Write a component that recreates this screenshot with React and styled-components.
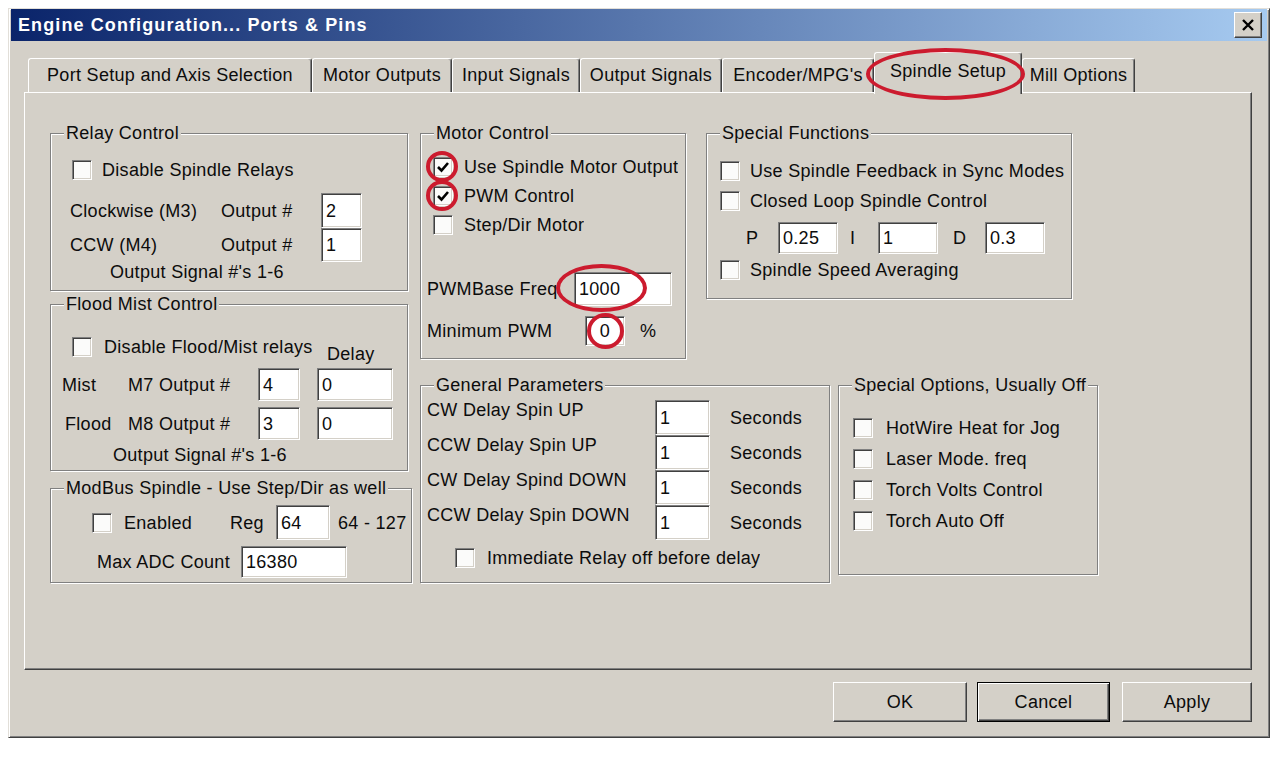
import React from 'react';
import styled, { createGlobalStyle } from 'styled-components';

const GlobalStyle = createGlobalStyle`
  html, body {
    margin: 0;
    padding: 0;
    background: #fff;
  }
  body {
    font-family: "Liberation Sans", Arial, sans-serif;
    font-size: 18px;
    letter-spacing: 0.3px;
    color: #0c0c0c;
  }
`;

const Window = styled.div`
  box-sizing: border-box;
  margin: 8px 0 0 8px;
  width: 1262px;
  height: 730px;
  padding: 0 2px;
  background: #d4d0c8;
  border: 1px solid;
  border-color: #e2dfd9 #404040 #404040 #e2dfd9;
  box-shadow: inset 1px 1px 0 #fff, inset -1px -1px 0 #808080;
  display: flex;
  flex-direction: column;
`;

const TitleBar = styled.div`
  height: 32px;
  display: flex;
  align-items: center;
  padding-left: 7px;
  background: linear-gradient(to right, #0a246a, #a6caf0);
`;

const Title = styled.span`
  color: #fff;
  font-weight: bold;
  font-size: 18px;
  letter-spacing: 1.1px;
`;

const CloseButton = styled.div`
  box-sizing: border-box;
  width: 28px;
  height: 26px;
  margin: 0 5px 0 auto;
  background: #d4d0c8;
  border: 1px solid;
  border-color: #fff #404040 #404040 #fff;
  box-shadow: inset -1px -1px 0 #808080;
  display: flex;
  align-items: center;
  justify-content: center;
`;

const TabStrip = styled.div`
  height: 51px;
  display: flex;
  align-items: flex-end;
  padding-left: 17px;
`;

const Tab = styled.div`
  box-sizing: border-box;
  position: relative;
  z-index: ${p => (p.$active ? 2 : 0)};
  width: ${p => p.$w}px;
  height: ${p => (p.$active ? 42 : 34)}px;
  margin-bottom: ${p => (p.$active ? -2 : 0)}px;
  padding-bottom: ${p => (p.$active ? 4 : 0)}px;
  display: flex;
  align-items: center;
  justify-content: center;
  background: #d4d0c8;
  border-top: 1px solid #fff;
  border-left: 1px solid #fff;
  border-right: 1px solid #404040;
  border-radius: 3px 3px 0 0;
  box-shadow: inset -1px 0 0 #808080;
  white-space: nowrap;
`;

const Panel = styled.div`
  box-sizing: border-box;
  position: relative;
  z-index: 1;
  width: 1228px;
  height: 578px;
  margin-left: 13px;
  padding: 30px 0 0 25px;
  display: flex;
  align-items: flex-start;
  border: 1px solid;
  border-color: #fff #404040 #404040 #fff;
  box-shadow: inset -1px -1px 0 #808080;
`;

const Column = styled.div`
  display: flex;
  flex-direction: column;
  width: ${p => p.$w}px;
  margin-left: ${p => p.$ml || 0}px;
`;

const GroupRow = styled.div`
  display: flex;
  align-items: flex-start;
  margin-top: ${p => p.$mt || 0}px;
`;

const Group = styled.fieldset`
  box-sizing: border-box;
  min-width: 0;
  width: ${p => p.$w}px;
  height: ${p => p.$h}px;
  margin: ${p => p.$mt || 0}px 0 0 ${p => p.$ml || 0}px;
  padding: 0;
  border: 1px solid #808080;
  box-shadow: inset 1px 1px 0 #fff, 1px 1px 0 #fff;
`;

const Legend = styled.legend`
  margin-left: 13px;
  padding: 0 2px;
  line-height: 20px;
  background: #d4d0c8;
  white-space: nowrap;
`;

const Body = styled.div`
  display: flex;
  flex-direction: column;
  padding: ${p => p.$pt}px 0 0 ${p => p.$pl}px;
`;

const Row = styled.div`
  display: flex;
  align-items: ${p => p.$align || 'center'};
  height: ${p => (p.$h ? `${p.$h}px` : 'auto')};
  margin-top: ${p => p.$mt || 0}px;
  margin-left: ${p => p.$ml || 0}px;
`;

const Label = styled.span`
  flex-shrink: 0;
  width: ${p => (p.$w ? `${p.$w}px` : 'auto')};
  margin-left: ${p => p.$ml || 0}px;
  margin-top: ${p => p.$mt || 0}px;
  line-height: 20px;
  white-space: nowrap;
  overflow: hidden;
  align-self: ${p => p.$self || 'auto'};
`;

const Field = styled.div`
  box-sizing: border-box;
  position: relative;
  flex-shrink: 0;
  width: ${p => p.$w}px;
  height: ${p => p.$h}px;
  margin-left: ${p => p.$ml || 0}px;
  padding-left: ${p => (p.$center ? 0 : 4)}px;
  display: flex;
  align-items: center;
  justify-content: ${p => (p.$center ? 'center' : 'flex-start')};
  background: #fff;
  border: 1px solid;
  border-color: #808080 #fff #fff #808080;
  box-shadow: inset 1px 1px 0 #404040, inset -1px -1px 0 #d4d0c8;
  line-height: 20px;
`;

const Check = styled.span`
  box-sizing: border-box;
  position: relative;
  flex-shrink: 0;
  width: 20px;
  height: 20px;
  margin-left: ${p => p.$ml || 0}px;
  display: flex;
  align-items: center;
  justify-content: center;
  background: #fbfbfa;
  border: 1px solid;
  border-color: #808080 #fff #fff #808080;
  box-shadow: inset 1px 1px 0 #404040, inset -1px -1px 0 #d4d0c8;
`;

const Ring = styled.span`
  position: absolute;
  left: ${p => p.$l}px;
  top: ${p => p.$t}px;
  width: ${p => p.$w}px;
  height: ${p => p.$h}px;
  box-sizing: border-box;
  border: 4px solid #cc1b2e;
  border-radius: 50%;
  pointer-events: none;
`;

const Footer = styled.div`
  display: flex;
  justify-content: flex-end;
  margin-top: 12px;
  padding-right: 15px;
`;

const Button = styled.div`
  box-sizing: border-box;
  width: ${p => p.$w}px;
  height: 40px;
  margin-left: ${p => p.$ml || 0}px;
  display: flex;
  align-items: center;
  justify-content: center;
  background: #d4d0c8;
  border: 1px solid;
  border-color: ${p => (p.$default ? '#000' : '#fff #404040 #404040 #fff')};
  box-shadow: ${p =>
    p.$default
      ? 'inset 1px 1px 0 #fff, inset -1px -1px 0 #404040, inset -2px -2px 0 #808080'
      : 'inset -1px -1px 0 #808080'};
`;

const Tick = () => (
  <svg width="14" height="12" viewBox="0 0 14 12">
    <path d="M2 6 L5.5 9.5 L12 2" fill="none" stroke="#000" strokeWidth="2.6" />
  </svg>
);

const tabs = [
  { label: 'Port Setup and Axis Selection', w: 284 },
  { label: 'Motor Outputs', w: 140 },
  { label: 'Input Signals', w: 128 },
  { label: 'Output Signals', w: 142 },
  { label: "Encoder/MPG's", w: 152 },
  { label: 'Spindle Setup', w: 148, active: true },
  { label: 'Mill Options', w: 113 },
];

const delays = ['CW Delay Spin UP', 'CCW Delay Spin UP', 'CW Delay Spind DOWN', 'CCW Delay Spin DOWN'];
const options = ['HotWire Heat for Jog', 'Laser Mode. freq', 'Torch Volts Control', 'Torch Auto Off'];

export default function App() {
  return (
    <>
      <GlobalStyle />
      <Window>
        <TitleBar>
          <Title>Engine Configuration... Ports &amp; Pins</Title>
          <CloseButton>
            <svg width="14" height="12" viewBox="0 0 14 12">
              <path d="M2 1 L12 11 M12 1 L2 11" stroke="#000" strokeWidth="2.4" />
            </svg>
          </CloseButton>
        </TitleBar>

        <TabStrip>
          {tabs.map(t => (
            <Tab key={t.label} $w={t.w} $active={t.active}>
              {t.label}
              {t.active && <Ring $l={-9} $t={-5} $w={159} $h={52} />}
            </Tab>
          ))}
        </TabStrip>

        <Panel>
          <Column $w={362}>
            <Group $w={358} $h={168}>
              <Legend>Relay Control</Legend>
              <Body $pt={15} $pl={19}>
                <Row $h={24} $ml={2}>
                  <Check />
                  <Label $ml={10}>Disable Spindle Relays</Label>
                </Row>
                <Row $mt={11}>
                  <Label $w={151}>Clockwise (M3)</Label>
                  <Label $w={100}>Output #</Label>
                  <Field $w={41} $h={35}>2</Field>
                </Row>
                <Row>
                  <Label $w={151}>CCW (M4)</Label>
                  <Label $w={100}>Output #</Label>
                  <Field $w={41} $h={34}>1</Field>
                </Row>
                <Row $ml={40}>
                  <Label>Output Signal #'s 1-6</Label>
                </Row>
              </Body>
            </Group>

            <Group $w={358} $h={177} $mt={3}>
              <Legend>Flood Mist Control</Legend>
              <Body $pt={21} $pl={11}>
                <Row $h={24} $ml={10}>
                  <Check />
                  <Label $w={223} $ml={12}>Disable Flood/Mist relays</Label>
                  <Label $mt={14}>Delay</Label>
                </Row>
                <Row $mt={9}>
                  <Label $w={66}>Mist</Label>
                  <Label $w={130}>M7 Output #</Label>
                  <Field $w={42} $h={33}>4</Field>
                  <Field $w={76} $h={33} $ml={17}>0</Field>
                </Row>
                <Row $mt={6}>
                  <Label $w={63} $ml={3}>Flood</Label>
                  <Label $w={130}>M8 Output #</Label>
                  <Field $w={42} $h={33}>3</Field>
                  <Field $w={76} $h={33} $ml={17}>0</Field>
                </Row>
                <Row $mt={5} $ml={51}>
                  <Label>Output Signal #'s 1-6</Label>
                </Row>
              </Body>
            </Group>

            <Group $w={362} $h={105} $mt={7}>
              <Legend>ModBus Spindle - Use Step/Dir as well</Legend>
              <Body $pt={7} $pl={0}>
                <Row $ml={41}>
                  <Check />
                  <Label $w={106} $ml={12}>Enabled</Label>
                  <Label $w={46}>Reg</Label>
                  <Field $w={54} $h={35}>64</Field>
                  <Label $ml={8}>64 - 127</Label>
                </Row>
                <Row $mt={6} $ml={46}>
                  <Label $w={144}>Max ADC Count</Label>
                  <Field $w={106} $h={32}>16380</Field>
                </Row>
              </Body>
            </Group>
          </Column>

          <Column $w={678} $ml={8}>
            <GroupRow>
              <Group $w={266} $h={236}>
                <Legend>Motor Control</Legend>
                <Body $pt={9} $pl={12}>
                  <Row $h={29}>
                    <Check>
                      <Tick />
                      <Ring $l={-8} $t={-7} $w={32} $h={31} />
                    </Check>
                    <Label $ml={11}>Use Spindle Motor Output</Label>
                  </Row>
                  <Row $h={29}>
                    <Check>
                      <Tick />
                      <Ring $l={-8} $t={-7} $w={32} $h={31} />
                    </Check>
                    <Label $ml={11}>PWM Control</Label>
                  </Row>
                  <Row $h={29}>
                    <Check />
                    <Label $ml={11}>Step/Dir Motor</Label>
                  </Row>
                  <Row $mt={33} $ml={-6}>
                    <Label $w={147}>PWMBase Freq</Label>
                    <Field $w={98} $h={34}>
                      1000
                      <Ring $l={-19} $t={-9} $w={91} $h={48} />
                    </Field>
                  </Row>
                  <Row $mt={10} $ml={-6}>
                    <Label $w={158}>Minimum PWM</Label>
                    <Field $w={40} $h={30} $center>
                      0
                      <Ring $l={1} $t={-4} $w={37} $h={36} />
                    </Field>
                    <Label $ml={15}>%</Label>
                  </Row>
                </Body>
              </Group>

              <Group $w={366} $h={176} $ml={20}>
                <Legend>Special Functions</Legend>
                <Body $pt={13} $pl={13}>
                  <Row $h={30}>
                    <Check />
                    <Label $w={318} $ml={10}>Use Spindle Feedback in Sync Modes</Label>
                  </Row>
                  <Row $h={30}>
                    <Check />
                    <Label $ml={10}>Closed Loop Spindle Control</Label>
                  </Row>
                  <Row $mt={6} $ml={26}>
                    <Label $w={32}>P</Label>
                    <Field $w={60} $h={32}>0.25</Field>
                    <Label $w={28} $ml={12}>I</Label>
                    <Field $w={60} $h={32}>1</Field>
                    <Label $w={32} $ml={15}>D</Label>
                    <Field $w={60} $h={32}>0.3</Field>
                  </Row>
                  <Row $h={30} $mt={1}>
                    <Check />
                    <Label $ml={10}>Spindle Speed Averaging</Label>
                  </Row>
                </Body>
              </Group>
            </GroupRow>

            <GroupRow $mt={16}>
              <Group $w={410} $h={208}>
                <Legend>General Parameters</Legend>
                <Body $pt={5} $pl={6}>
                  {delays.map(d => (
                    <Row key={d} $align="flex-start">
                      <Label $w={228}>{d}</Label>
                      <Field $w={55} $h={35}>1</Field>
                      <Label $ml={20} $self="center">Seconds</Label>
                    </Row>
                  ))}
                  <Row $h={24} $mt={6} $ml={28}>
                    <Check />
                    <Label $ml={12}>Immediate Relay off before delay</Label>
                  </Row>
                </Body>
              </Group>

              <Group $w={260} $h={200} $ml={8}>
                <Legend>Special Options, Usually Off</Legend>
                <Body $pt={17} $pl={14}>
                  {options.map(o => (
                    <Row key={o} $h={31}>
                      <Check />
                      <Label $ml={13}>{o}</Label>
                    </Row>
                  ))}
                </Body>
              </Group>
            </GroupRow>
          </Column>
        </Panel>

        <Footer>
          <Button $w={134}>OK</Button>
          <Button $w={133} $ml={10} $default>Cancel</Button>
          <Button $w={130} $ml={12}>Apply</Button>
        </Footer>
      </Window>
    </>
  );
}
